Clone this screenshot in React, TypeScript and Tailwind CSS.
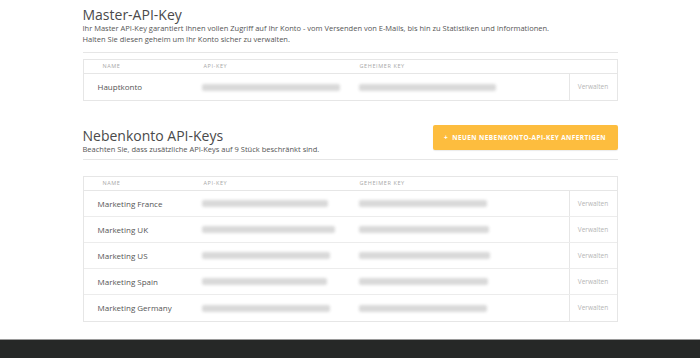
import React from 'react'

const font = { fontFamily: '"Open Sans", "Noto Sans", sans-serif' }

type Row = { name: string; api: number; secret: number }

const master: Row[] = [{ name: 'Hauptkonto', api: 138, secret: 137 }]

const subs: Row[] = [
  { name: 'Marketing France', api: 126, secret: 128 },
  { name: 'Marketing UK', api: 133, secret: 130 },
  { name: 'Marketing US', api: 128, secret: 131 },
  { name: 'Marketing Spain', api: 125, secret: 129 },
  { name: 'Marketing Germany', api: 128, secret: 128 },
]

// blurred key placeholder
function Blur({ w }: { w: number }) {
  return (
    <div className="flex items-center">
      <div className="h-[7px] rounded-[2px] bg-[#d9d9d9] blur-[1.5px]" style={{ width: w }} />
    </div>
  )
}

function KeyTable({ rows }: { rows: Row[] }) {
  return (
    <div className="border border-[#e6e6e6]">
      <div className="grid grid-cols-[118px_157px_1fr] h-[14px] items-center border-b border-[#e6e6e6] text-[5.5px] uppercase tracking-[0.6px] text-[#a8a8a8]">
        <div className="pl-[19px]">Name</div>
        <div className="pl-[2px]">API-Key</div>
        <div className="pl-[1px]">Geheimer Key</div>
      </div>
      {rows.map((r, i) => (
        <div key={r.name} className={`grid grid-cols-[118px_157px_1fr_48px] h-[26px] items-center ${i < rows.length - 1 ? 'border-b border-[#ececec]' : ''}`}>
          <div className="pl-[14px] text-[8px] text-[#555]">{r.name}</div>
          <Blur w={r.api} />
          <Blur w={r.secret} />
          <div className="h-full flex items-center justify-center border-l border-[#e6e6e6] text-[6.5px] text-[#b5b5b5]">Verwalten</div>
        </div>
      ))}
    </div>
  )
}

export default function App() {
  return (
    <div className="bg-white overflow-hidden h-[358px]" style={font}>
      <div className="w-[535px] mx-auto">
        <div className="pt-[7px]">
          <h1 className="text-[14px] leading-[16px] text-[#4a4a4a]">Master-API-Key</h1>
          <p className="text-[7.5px] leading-[11px] text-[#555]">
            Ihr Master API-Key garantiert Ihnen vollen Zugriff auf Ihr Konto - vom Versenden von E-Mails, bis hin zu Statistiken und Informationen.
            <br />
            Halten Sie diesen geheim um Ihr Konto sicher zu verwalten.
          </p>
        </div>
        <div className="mt-[7px] border-t border-[#e6e6e6]" />
        <div className="mt-[6px]">
          <KeyTable rows={master} />
        </div>

        <div className="mt-[24px] flex items-start justify-between">
          <div className="pt-[3px]">
            <h2 className="text-[14px] leading-[16px] text-[#4a4a4a]">Nebenkonto API-Keys</h2>
            <p className="text-[7.5px] leading-[11px] text-[#555]">Beachten Sie, dass zusätzliche API-Keys auf 9 Stück beschränkt sind.</p>
          </div>
          <button className="w-[185px] h-[25px] rounded-[2px] bg-[#fdbd3e] text-white text-[6.5px] font-bold uppercase tracking-[0.4px] shadow-[0_1px_1px_rgba(0,0,0,0.08)]">
            + &nbsp;Neuen Nebenkonto-API-Key anfertigen
          </button>
        </div>
        <div className="mt-[4px] border-t border-[#e6e6e6]" />
        <div className="mt-[16px]">
          <KeyTable rows={subs} />
        </div>
      </div>
      <div className="mt-[17px] h-[40px] bg-[#262827] border-t border-[#9a9a9a]" />
    </div>
  )
}
